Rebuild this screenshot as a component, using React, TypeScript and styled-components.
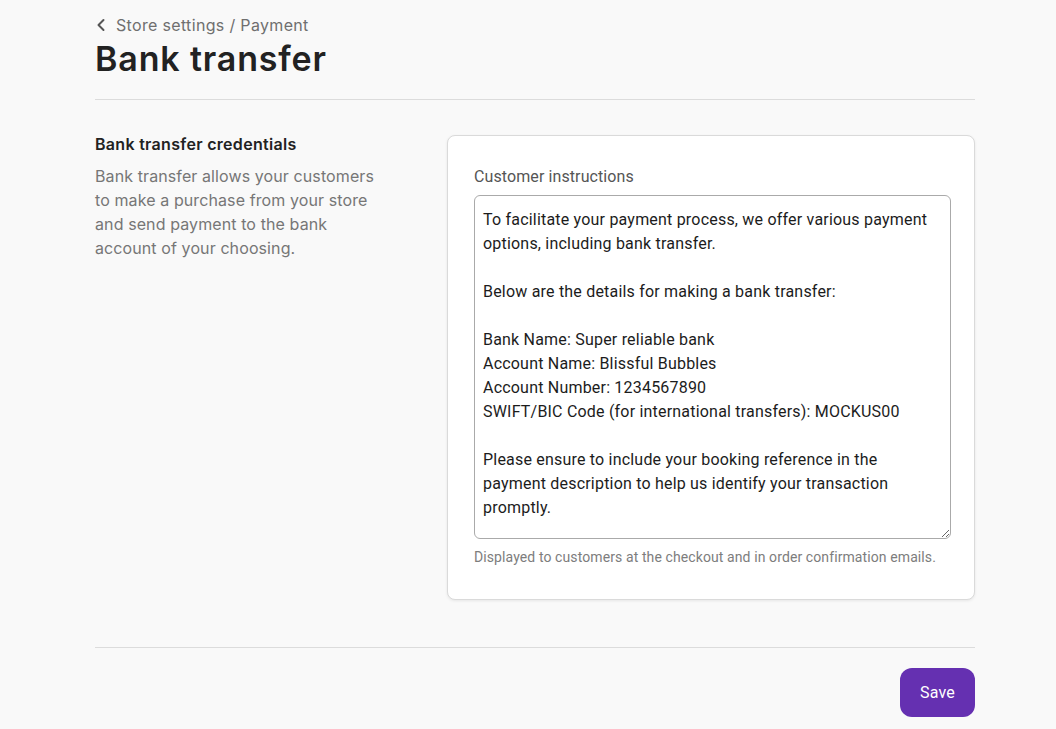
import React from "react";
import styled, { createGlobalStyle } from "styled-components";

const GlobalStyle = createGlobalStyle`
  html, body {
    margin: 0;
    padding: 0;
    background: #f9f9f9;
    font-family: Inter, "Noto Sans", sans-serif;
    color: #222;
  }
`;

const Page = styled.div`
  width: 880px;
  padding: 12px 0 12px 95px;
  box-sizing: content-box;
`;

const Breadcrumb = styled.a`
  display: flex;
  align-items: center;
  gap: 10px;
  font-size: 16px;
  line-height: 26px;
  letter-spacing: 0.33px;
  color: #6f6f6f;
  text-decoration: none;
  margin-left: 1px;
`;

const Title = styled.h1`
  margin: 0;
  font-size: 34px;
  line-height: 42px;
  font-weight: 600;
  letter-spacing: 0.85px;
  color: #222;
`;

const Divider = styled.hr<{ $top: number }>`
  border: none;
  border-top: 1px solid #dcdcdc;
  margin: ${({ $top }) => $top}px 0 0;
`;

const Section = styled.div`
  display: grid;
  grid-template-columns: 1fr 528px;
  margin-top: 35px;
`;

const Aside = styled.div`
  width: 290px;
`;

const AsideTitle = styled.h2`
  margin: 0;
  font-size: 16px;
  line-height: 18px;
  font-weight: 600;
  letter-spacing: 0.3px;
  color: #222;
`;

const AsideText = styled.p`
  margin: 11px 0 0;
  font-size: 16px;
  line-height: 24px;
  letter-spacing: 0.1px;
  color: #767676;
`;

const Card = styled.div`
  background: #fff;
  border: 1px solid #dadada;
  border-radius: 8px;
  box-shadow: 0 1px 3px rgba(0, 0, 0, 0.08);
  padding: 32px 23px 34px 26px;
  font-family: Roboto, "Liberation Sans", sans-serif;
`;

const Label = styled.label`
  display: block;
  font-size: 16px;
  line-height: 18px;
  letter-spacing: 0.1px;
  color: #555;
  margin-bottom: 9px;
`;

const TextArea = styled.textarea`
  display: block;
  width: 100%;
  box-sizing: border-box;
  height: 344px;
  padding: 12px 8px 10px;
  border: 1px solid #aaa;
  border-radius: 6px;
  font-family: Roboto, "Liberation Sans", sans-serif;
  font-size: 16px;
  line-height: 24px;
  letter-spacing: 0.2px;
  color: #1c1c1c;
  background: #fff;
  resize: vertical;
  outline: none;
`;

const Help = styled.p`
  margin: 10px 0 0;
  font-size: 14px;
  line-height: 16px;
  letter-spacing: 0.1px;
  color: #7d7d7d;
`;

const Footer = styled.div`
  display: flex;
  justify-content: flex-end;
  padding-top: 20px;
`;

const SaveButton = styled.button`
  width: 75px;
  height: 49px;
  border: none;
  border-radius: 12px;
  background: #6530b1;
  color: #fff;
  font-family: Roboto, "Liberation Sans", sans-serif;
  font-size: 16px;
  letter-spacing: 0.2px;
  cursor: pointer;
`;

const instructions = `To facilitate your payment process, we offer various payment options, including bank transfer.

Below are the details for making a bank transfer:

Bank Name: Super reliable bank
Account Name: Blissful Bubbles
Account Number: 1234567890
SWIFT/BIC Code (for international transfers): MOCKUS00

Please ensure to include your booking reference in the payment description to help us identify your transaction promptly.`;

const ChevronLeft = () => (
  <svg width="10" height="14" viewBox="0 0 10 14" fill="none">
    <path d="M7.5 2 L2.5 7 L7.5 12" stroke="#555" strokeWidth="2" strokeLinecap="round" strokeLinejoin="round" />
  </svg>
);

export default function App() {
  return (
    <>
      <GlobalStyle />
      <Page>
        <Breadcrumb href="#">
          <ChevronLeft />
          Store settings / Payment
        </Breadcrumb>
        <Title>Bank transfer</Title>
        <Divider $top={19} />
        <Section>
          <Aside>
            <AsideTitle>Bank transfer credentials</AsideTitle>
            <AsideText>
              Bank transfer allows your customers to make a purchase from your store and send payment to the bank
              account of your choosing.
            </AsideText>
          </Aside>
          <Card>
            <Label htmlFor="instructions">Customer instructions</Label>
            <TextArea id="instructions" defaultValue={instructions} />
            <Help>Displayed to customers at the checkout and in order confirmation emails.</Help>
          </Card>
        </Section>
        <Divider $top={47} />
        <Footer>
          <SaveButton>Save</SaveButton>
        </Footer>
      </Page>
    </>
  );
}
